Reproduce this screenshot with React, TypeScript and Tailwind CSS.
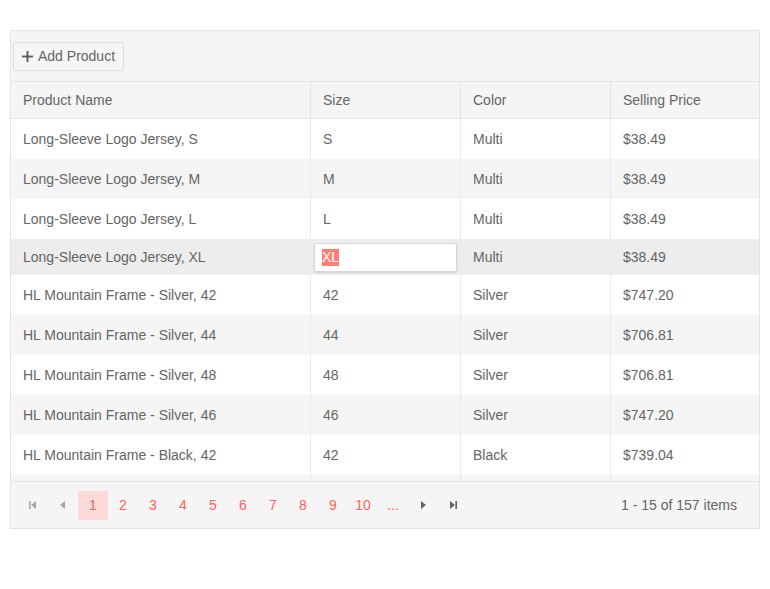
import React from 'react';

const rows = [
  { name: 'Long-Sleeve Logo Jersey, S', size: 'S', color: 'Multi', price: '$38.49' },
  { name: 'Long-Sleeve Logo Jersey, M', size: 'M', color: 'Multi', price: '$38.49' },
  { name: 'Long-Sleeve Logo Jersey, L', size: 'L', color: 'Multi', price: '$38.49' },
  { name: 'Long-Sleeve Logo Jersey, XL', size: 'XL', color: 'Multi', price: '$38.49', editing: true },
  { name: 'HL Mountain Frame - Silver, 42', size: '42', color: 'Silver', price: '$747.20' },
  { name: 'HL Mountain Frame - Silver, 44', size: '44', color: 'Silver', price: '$706.81' },
  { name: 'HL Mountain Frame - Silver, 48', size: '48', color: 'Silver', price: '$706.81' },
  { name: 'HL Mountain Frame - Silver, 46', size: '46', color: 'Silver', price: '$747.20' },
  { name: 'HL Mountain Frame - Black, 42', size: '42', color: 'Black', price: '$739.04' },
  { name: 'HL Mountain Frame - Black, 44', size: '44', color: 'Black', price: '$739.04' },
];

const cols = ['w-[300px]', 'w-[150px]', 'w-[150px]', 'w-[148px]'];

function Arrow({ dir, bar, disabled }: { dir: 'left' | 'right'; bar?: boolean; disabled?: boolean }) {
  const fill = disabled ? '#a8a8a8' : '#656565';
  return (
    <svg width="10" height="10" viewBox="0 0 10 10">
      {dir === 'left' ? (
        <>
          {bar && <rect x="1" y="1" width="1.6" height="8" fill={fill} />}
          <polygon points={bar ? '3,5 8,1 8,9' : '2,5 7,1 7,9'} fill={fill} />
        </>
      ) : (
        <>
          <polygon points={bar ? '2,1 7,5 2,9' : '3,1 8,5 3,9'} fill={fill} />
          {bar && <rect x="7.4" y="1" width="1.6" height="8" fill={fill} />}
        </>
      )}
    </svg>
  );
}

export default function App() {
  const pages = ['1', '2', '3', '4', '5', '6', '7', '8', '9', '10', '...'];

  return (
    <div className="min-h-[589px] bg-white pt-[30px] px-[10px] text-[14px] text-[#656565]" style={{ fontFamily: '"Liberation Sans", Arial, sans-serif' }}>
      <div className="w-[750px] border border-[#e4e4e4] bg-[#f5f5f5]">
        {/* Toolbar */}
        <div className="h-[51px] flex items-center px-[2px] border-b border-[#e4e4e4]">
          <button className="h-[29px] px-[8px] flex items-center gap-[5px] bg-[#f6f6f6] border border-[#dedede] rounded-[2px] text-[#656565]">
            <svg width="11" height="11" viewBox="0 0 11 11">
              <rect x="4.6" y="0" width="1.8" height="11" fill="#555" />
              <rect x="0" y="4.6" width="11" height="1.8" fill="#555" />
            </svg>
            <span>Add Product</span>
          </button>
        </div>

        {/* Header */}
        <div className="h-[37px] flex border-b border-[#e4e4e4]">
          {['Product Name', 'Size', 'Color', 'Selling Price'].map((h, i) => (
            <div key={h} className={`${cols[i]} flex items-center px-[12px] ${i < 3 ? 'border-r border-[#e4e4e4]' : ''}`}>
              {h}
            </div>
          ))}
        </div>

        {/* Body */}
        <div className="h-[363px] overflow-hidden bg-white border-b border-[#e4e4e4]">
          {rows.map((r, idx) => {
            const bg = r.editing ? 'bg-[#ededed]' : idx % 2 === 1 ? 'bg-[#f5f5f5]' : 'bg-white';
            const vals = [r.name, r.size, r.color, r.price];
            return (
              <div key={idx} className={`flex ${r.editing ? 'h-[36px]' : 'h-[40px]'} ${bg}`}>
                {vals.map((v, i) => (
                  <div key={i} className={`${cols[i]} flex items-center ${i < 3 ? 'border-r border-[#ebebeb]' : ''} ${r.editing && i === 1 ? 'px-[3px]' : 'px-[12px]'}`}>
                    {r.editing && i === 1 ? (
                      <div className="w-[143px] h-[29px] flex items-center px-[7px] bg-white border border-[#d7d7d7] rounded-[2px] shadow-[0_1px_2px_rgba(0,0,0,0.12)]">
                        <span className="bg-[#ff7d73] text-white leading-[17px]">{v}</span>
                      </div>
                    ) : (
                      v
                    )}
                  </div>
                ))}
              </div>
            );
          })}
        </div>

        {/* Pager */}
        <div className="h-[46px] flex items-center pl-[7px] pr-[22px]">
          <div className="flex items-center">
            <div className="w-[30px] h-[29px] flex items-center justify-center"><Arrow dir="left" bar disabled /></div>
            <div className="w-[30px] h-[29px] flex items-center justify-center"><Arrow dir="left" disabled /></div>
            {pages.map((p, i) => (
              <div key={p} className={`w-[30px] h-[29px] flex items-center justify-center text-[#ff6358] ${i === 0 ? 'bg-[#fcdad7]' : ''}`}>
                {p}
              </div>
            ))}
            <div className="w-[30px] h-[29px] flex items-center justify-center"><Arrow dir="right" /></div>
            <div className="w-[30px] h-[29px] flex items-center justify-center"><Arrow dir="right" bar /></div>
          </div>
          <div className="ml-auto">1 - 15 of 157 items</div>
        </div>
      </div>
    </div>
  );
}
